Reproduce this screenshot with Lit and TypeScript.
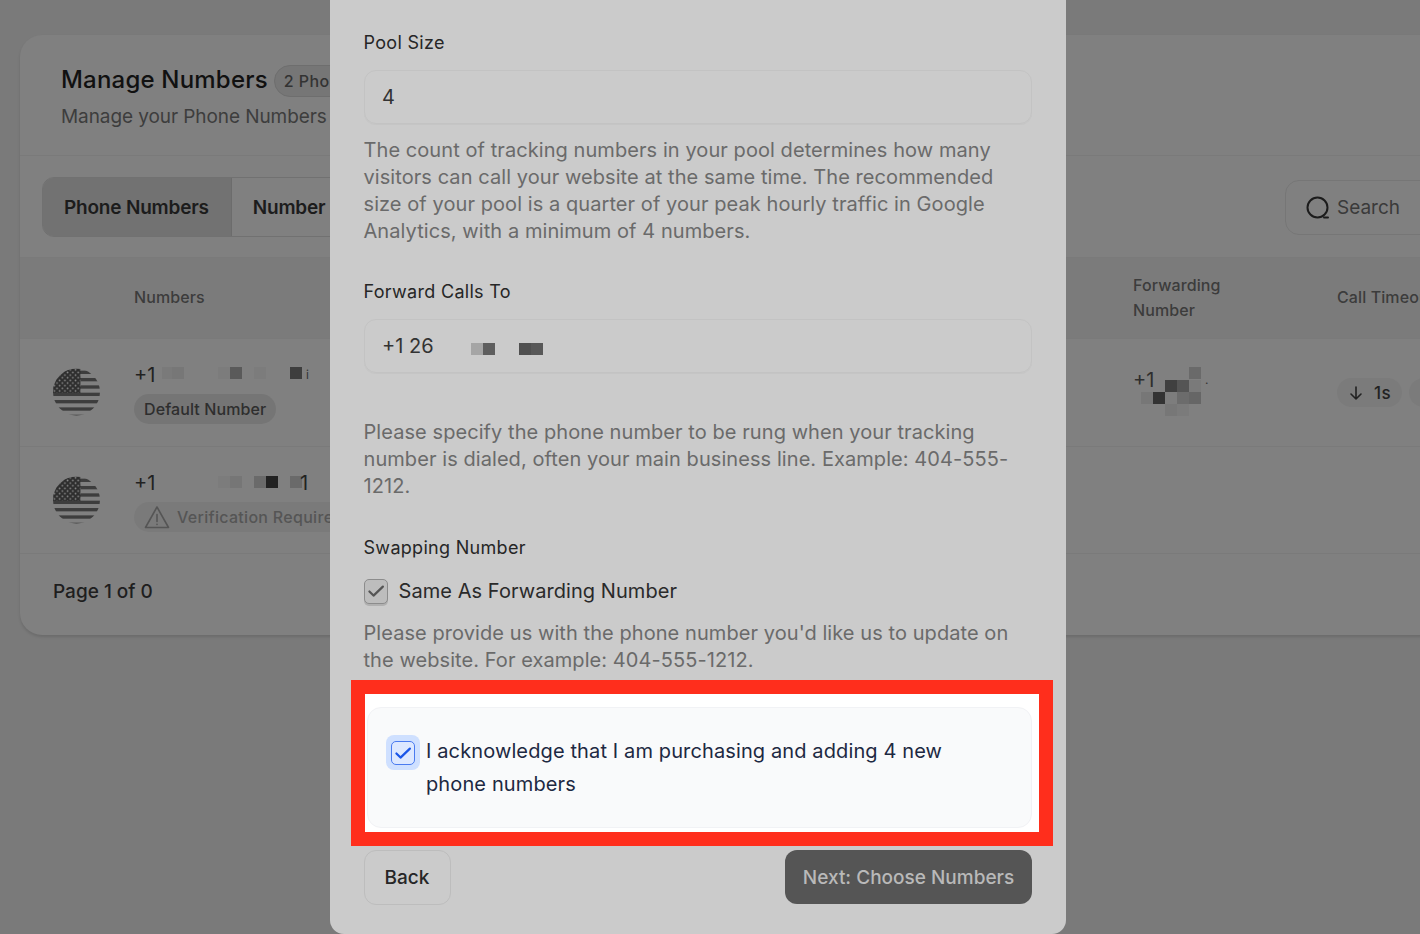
import { LitElement, html, css, svg } from "lit";
import { customElement } from "lit/decorators.js";

type Cell = [number, number, string];

const mosaic = (cells: Cell[]) => html`<span class="mosaic">${cells.map(
  ([x, y, c]) => html`<i style="left:${x}px;top:${y}px;background:${c}"></i>`
)}</span>`;

const flag = () => html`<svg class="flag" width="47" height="48" viewBox="0 0 48 48">
  <defs>
    <clipPath id="fc"><circle cx="24" cy="24" r="24"></circle></clipPath>
    <pattern id="st" width="5.4" height="5.4" patternUnits="userSpaceOnUse">
      <circle cx="1.4" cy="1.4" r="0.9" fill="#8a8a8a"></circle>
      <circle cx="4.1" cy="4.1" r="0.9" fill="#8a8a8a"></circle>
    </pattern>
  </defs>
  <g clip-path="url(#fc)">
    ${[0, 7.5, 15, 22.5, 30, 37.5, 45].map(
      (y) => svg`<rect x="0" y="${y + 2.2}" width="48" height="3.4" fill="#3d3d3d"></rect>`
    )}
    <rect x="0" y="0" width="28" height="25" fill="#2e2e2e"></rect>
    <rect x="0" y="0" width="28" height="25" fill="url(#st)"></rect>
  </g>
</svg>`;

const check = () => html`<svg viewBox="0 0 24 24" width="24" height="24" fill="none" stroke="currentColor" stroke-width="2.4" stroke-linecap="round" stroke-linejoin="round"><path d="M4.8 12.5l4.5 4.5L19.5 7.2"></path></svg>`;

const arrow = () => html`<svg width="16" height="16" viewBox="0 0 16 16" fill="none" stroke="#222" stroke-width="1.6" stroke-linecap="round" stroke-linejoin="round"><path d="M8 2v12M3 9l5 5 5-5"></path></svg>`;

@customElement("app-root")
export class AppRoot extends LitElement {
  static styles = css`
    :host {
      display: block;
      position: relative;
      width: 1420px;
      height: 934px;
      overflow: hidden;
      background: #7a7a7a;
      font-family: Inter, "Liberation Sans", sans-serif;
      color: #222;
    }
    .page { padding: 35px 0 0 20px; width: 1460px; box-sizing: border-box; }
    .card {
      height: 600px;
      box-sizing: border-box;
      background: #808080;
      border-radius: 22px;
      box-shadow: 0 2px 3px rgba(0,0,0,.12);
      overflow: hidden;
    }
    .head {
      height: 121px;
      box-sizing: border-box;
      padding: 27px 0 0 41px;
      border-bottom: 1px solid #7a7a7a;
    }
    .title-row { display: flex; align-items: center; gap: 6px; height: 34px; }
    .title { font-size: 24px; font-weight: 500; color: #111; letter-spacing: .2px; white-space: nowrap; }
    .count {
      font-size: 16px; font-weight: 500; color: #333; white-space: nowrap; margin-top: 4px;
      background: #767676; border: 1px solid #6e6e6e; border-radius: 16px; padding: 5px 9px;
      letter-spacing: .4px;
    }
    .sub { font-size: 19px; color: #3d3d3d; margin-top: 8px; line-height: 26px; white-space: nowrap; letter-spacing: -.08px; }
    .toolbar {
      height: 102px;
      box-sizing: border-box;
      padding: 21px 0 0 22px;
      display: flex;
      justify-content: space-between;
      border-bottom: 1px solid #7a7a7a;
    }
    .tabs { display: flex; height: 60px; border: 1px solid #717171; border-radius: 12px; overflow: hidden; box-sizing: border-box; }
    .tab { display: flex; align-items: center; padding: 0 22px 0 21px; font-size: 19px; font-weight: 600; color: #1c1c1c; white-space: nowrap; letter-spacing: -.2px; }
    .tab.on { background: #727272; border-right: 1px solid #6c6c6c; }
    .search {
      width: 175px; height: 55px; box-sizing: border-box; margin-top: 3px;
      border: 1px solid #767676; border-radius: 14px;
      display: flex; align-items: center; gap: 7px; padding-left: 20px;
      font-size: 19px; color: #3a3a3a;
    }
    .row {
      display: grid;
      grid-template-columns: 114px 999px 204px 1fr;
      box-sizing: border-box;
      align-items: center;
      border-bottom: 1px solid #7a7a7a;
    }
    .thead { height: 81px; padding-bottom: 2px; background: #7b7b7b; font-size: 16px; font-weight: 500; color: #3c3c3c; line-height: 25px; letter-spacing: .1px; }
    .thead .two { margin-top: 2px; }
    .r1 { height: 108px; padding-bottom: 2px; }
    .r2 { height: 107px; }
    .flagcell { padding-left: 33px; display: flex; }
    .flag { display: block; }
    .num {
      position: relative; font-size: 20px; color: #222; line-height: 24px; height: 24px; margin-top: 3px;
    }
    .mosaic { position: absolute; left: 0; top: 0; }
    .mosaic i { position: absolute; display: block; width: 12px; height: 12px; }
    .tail { position: absolute; top: 0; }
    .tail.small { font-size: 12px; color: #333; }
    .stack { display: flex; flex-direction: column; align-items: flex-start; gap: 7px; }
    .pill {
      display: inline-flex; align-items: center; gap: 7px; height: 30px; box-sizing: border-box; padding: 0 10px;
      background: #757575; border-radius: 15px; font-size: 16px; font-weight: 500; color: #2e2e2e; white-space: nowrap; letter-spacing: .1px;
    }
    .pill.warn { background: #7a7a7a; color: #555; letter-spacing: .3px; }
    .time {
      display: inline-flex; align-items: center; gap: 10px; height: 29px; padding: 0 11px; background: #7b7b7b;
      border-radius: 15px; font-size: 17px; font-weight: 500; color: #222; letter-spacing: .5px;
    }
    .times { display: flex; gap: 7px; margin-top: 2px; }
    .fwd { position: relative; height: 48px; font-size: 20px; color: #2e2e2e; line-height: 24px; }
    .foot { padding: 26px 0 0 33px; font-size: 19px; font-weight: 500; color: #1e1e1e; }

    .modal {
      position: absolute; left: 330px; top: 0; bottom: 0; width: 736px; box-sizing: border-box;
      background: #cbcbcb;
      border-radius: 0 0 14px 14px;
      padding: 29px 34px 0 33.5px;
      display: flex; flex-direction: column;
      align-items: stretch;
    }
    .lab { font-size: 18px; line-height: 27px; color: #262626; letter-spacing: .3px; }
    .lab.l2 { margin-top: 33px; }
    .lab.l3 { margin-top: 34px; }
    .input {
      margin-top: 14px; height: 54px; box-sizing: border-box; flex: none;
      border: 1px solid #c3c3c3; border-radius: 12px;
      padding-left: 17.5px; display: flex; align-items: center;
      font-size: 20px; color: #333; position: relative; box-shadow: 0 1px 1px rgba(0,0,0,.03);
    }
    .help { font-size: 20px; line-height: 27px; color: #6a6a6a; letter-spacing: .07px; }
    .h1 { margin-top: 13px; }
    .h2 { margin-top: 46px; }
    .h3 { margin-top: 16px; }
    .same { display: flex; align-items: center; gap: 11px; height: 26px; margin-top: 17px; font-size: 20px; color: #2a2a2a; letter-spacing: .06px; }
    .box {
      width: 24px; height: 25px; box-sizing: border-box; border: 1.5px solid #8c8c8c; border-radius: 5px;
      background: #bdbdbd; color: #555; display: flex; align-items: center; justify-content: center;
      box-shadow: 0 2px 0 #b0b0b0;
    }
    .hl {
      margin: 6px -21px 0 -12.5px; height: 166px; box-sizing: border-box; flex: none;
      border: 14px solid #ff2e1c; background: #fff;
      padding: 13px 7px 4px 2px;
    }
    .ack {
      height: 100%; box-sizing: border-box; background: #f9fafb; border: 1px solid #f1f2f5; border-radius: 14px;
      padding: 27px 60px 0 18px; display: flex; gap: 6px;
    }
    .halo {
      width: 34px; height: 35px; flex: none; border-radius: 8px; background: #cfe0ff;
      display: flex; align-items: center; justify-content: center;
    }
    .halo .inner {
      width: 24px; height: 24px; box-sizing: border-box; border: 1.5px solid #4a7bf0; border-radius: 5px;
      background: #dde8ff; color: #1a56e8; display: flex; align-items: center; justify-content: center;
    }
    .ack-text { font-size: 20px; line-height: 33px; color: #1d2942; letter-spacing: .12px; }
    .btns { display: flex; justify-content: space-between; align-items: flex-start; margin-top: 4px; }
    .btn {
      box-sizing: border-box; border-radius: 12px; display: flex; align-items: center; justify-content: center;
      font-size: 19px; font-weight: 500;
    }
    .back { width: 87px; height: 55px; border: 1px solid #bdbdbd; color: #262626; }
    .next { width: 247px; height: 54px; background: #555; color: #b9b9b9; }
  `;

  render() {
    return html`
      <div class="page">
        <div class="card">
          <div class="head">
            <div class="title-row">
              <span class="title">Manage Numbers</span>
              <span class="count">2 Phone Numbers</span>
            </div>
            <div class="sub">Manage your Phone Numbers</div>
          </div>
          <div class="toolbar">
            <div class="tabs">
              <div class="tab on">Phone Numbers</div>
              <div class="tab">Number Pools</div>
            </div>
            <div class="search">
              <svg width="24" height="24" viewBox="0 0 24 24" fill="none" stroke="#1c1c1c" stroke-width="2" stroke-linecap="round"><circle cx="11.5" cy="11.5" r="10"></circle><path d="M18 21.5h4"></path></svg>
              <span>Search</span>
            </div>
          </div>
          <div class="row thead">
            <div></div>
            <div>Numbers</div>
            <div class="two">Forwarding<br />Number</div>
            <div>Call Timeout</div>
          </div>
          <div class="row r1">
            <div class="flagcell">${flag()}</div>
            <div class="stack">
              <div class="num">+1${mosaic([
                [28, 4, "#7a7a7a"], [38, 4, "#777"], [84, 4, "#7c7c7c"], [96, 4, "#5a5a5a"],
                [120, 4, "#7c7c7c"], [156, 4, "#3e3e3e"],
              ])}<span class="tail small" style="left:172px">i</span></div>
              <span class="pill">Default Number</span>
            </div>
            <div class="fwd">+1${mosaic([
              [56, -1, "#6a6a6a"], [32, 12, "#404040"], [44, 12, "#555"], [56, 12, "#7a7a7a"],
              [8, 24, "#777"], [20, 24, "#333"], [32, 24, "#7d7d7d"], [44, 24, "#6c6c6c"], [56, 24, "#666"],
              [32, 36, "#777"], [44, 36, "#7b7b7b"],
            ])}<span class="tail small" style="left:72px">.</span></div>
            <div class="times">
              <span class="time">${arrow()} 1s</span>
              <span class="time">${arrow()}</span>
            </div>
          </div>
          <div class="row r2">
            <div class="flagcell">${flag()}</div>
            <div class="stack">
              <div class="num">+1${mosaic([
                [84, 5, "#7c7c7c"], [96, 5, "#767676"], [120, 5, "#6a6a6a"], [132, 5, "#222"], [156, 5, "#6a6a6a"],
              ])}<span class="tail" style="left:166px">1</span></div>
              <span class="pill warn">
                <svg width="26" height="24" viewBox="0 0 26 24" fill="none" stroke="#555" stroke-width="1.6" stroke-linejoin="round" stroke-linecap="round"><path d="M13 2L1.5 22.5h23L13 2z"></path><path d="M13 9.5v7M13 19.3v.2"></path></svg>
                Verification Required
              </span>
            </div>
          </div>
          <div class="foot">Page 1 of 0</div>
        </div>
      </div>

      <div class="modal">
        <div class="lab">Pool Size</div>
        <div class="input">4</div>
        <div class="help h1">The count of tracking numbers in your pool determines how many visitors can call your website at the same time. The recommended size of your pool is a quarter of your peak hourly traffic in Google Analytics, with a minimum of 4 numbers.</div>
        <div class="lab l2">Forward Calls To</div>
        <div class="input">+1 26${mosaic([
          [106, 23, "#a5a5a5"], [118, 23, "#5e5e5e"], [154, 23, "#505050"], [166, 23, "#585858"],
        ])}</div>
        <div class="help h2">Please specify the phone number to be rung when your tracking number is dialed, often your main business line. Example: 404-555-1212.</div>
        <div class="lab l3">Swapping Number</div>
        <div class="same"><span class="box">${check()}</span>Same As Forwarding Number</div>
        <div class="help h3">Please provide us with the phone number you'd like us to update on the website. For example: 404-555-1212.</div>
        <div class="hl">
          <div class="ack">
            <span class="halo"><span class="inner">${check()}</span></span>
            <span class="ack-text">I acknowledge that I am purchasing and adding 4 new phone numbers</span>
          </div>
        </div>
        <div class="btns">
          <div class="btn back">Back</div>
          <div class="btn next">Next: Choose Numbers</div>
        </div>
      </div>
    `;
  }
}
